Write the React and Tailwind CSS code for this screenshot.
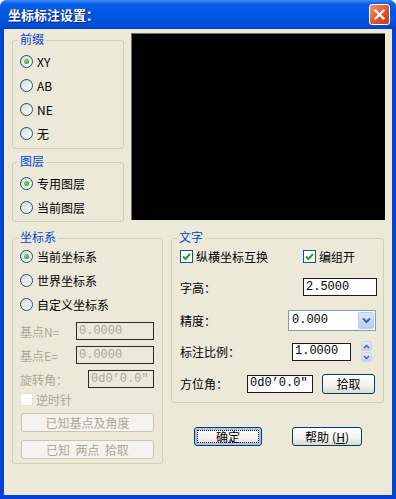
import React from 'react';

const BODY_BG = 'bg-[#ece9d8]';

function GroupBox({ label, className = '', children }) {
    return (
        <div className={`relative rounded-[3px] border border-[#d0d0bf] ${className}`}>
            <span className="absolute left-[5px] top-[-9px] bg-[#ece9d8] px-[2px] text-[12px] leading-[14px] text-[#0046d5]">
                {label}
            </span>
            {children}
        </div>
    );
}

function Radio({ checked = false, label }) {
    return (
        <div className="flex h-[13px] items-center">
            <span className="flex h-[13px] w-[13px] flex-none items-center justify-center rounded-full border border-[#1c5180] bg-[linear-gradient(135deg,#d8d6cc,#ffffff)]">
                {checked && <span className="h-[5px] w-[5px] rounded-full bg-[radial-gradient(circle_at_35%_35%,#6ee06e,#1a9a1a)]" />}
            </span>
            <span className="ml-[4px] text-[12px] leading-[13px] text-black">{label}</span>
        </div>
    );
}

function CheckBox({ checked = false, disabled = false, label }) {
    return (
        <div className="flex h-[13px] items-center">
            <span
                className={`flex h-[13px] w-[13px] flex-none items-center justify-center border bg-white ${
                    disabled ? 'border-[#e3e1d6]' : 'border-[#1c5180]'
                }`}
            >
                {checked && (
                    <svg width="11" height="11" viewBox="0 0 11 11">
                        <path d="M2 5.5 L4.5 8 L9 3" fill="none" stroke="#21a121" strokeWidth="2" />
                    </svg>
                )}
            </span>
            <span className={`ml-[3px] text-[12px] leading-[13px] ${disabled ? 'text-[#aca899]' : 'text-black'}`}>{label}</span>
        </div>
    );
}

function XPButton({ children, className = '', focused = false, disabled = false }) {
    if (disabled) {
        return (
            <div className={`flex items-center justify-center rounded-[3px] border border-[#c9c7ba] bg-[#f4f3ee] text-[12px] leading-[13px] text-[#aca899] ${className}`}>
                {children}
            </div>
        );
    }
    return (
        <div
            className={`flex items-center justify-center rounded-[3px] border border-[#003c74] bg-[linear-gradient(to_bottom,#ffffff,#f3f2ec_60%,#dcd8cb)] text-[12px] leading-[13px] text-black ${
                focused ? 'shadow-[inset_0_0_0_2px_#a6c2f2] outline-1 outline-dotted outline-black outline-offset-[-4px]' : ''
            } ${className}`}
        >
            {children}
        </div>
    );
}

function TextBox({ value, className = '', disabled = false }) {
    return (
        <div
            className={`flex items-center border pl-[2px] font-['Liberation_Mono',monospace] text-[12px] leading-[13px] ${
                disabled ? 'border-[#2a2a2a] bg-[#ece9d8] text-[#aca899]' : 'border-[#1b1b1b] bg-white text-black'
            } ${className}`}
        >
            {value}
        </div>
    );
}

export default function App() {
    return (
        <div className="flex h-[499px] w-[396px] flex-col rounded-t-[7px] bg-[#0841d6] font-['Noto_Sans_CJK_SC',sans-serif]">
            {/* title bar */}
            <div className="flex h-[29px] flex-none items-center rounded-t-[7px] bg-[linear-gradient(to_bottom,#3e8cf6_0%,#0a5fe9_14%,#0056e6_45%,#0052df_80%,#0043c6_100%)] pl-[8px] pr-[6px]">
                <span className="text-[13px] font-bold leading-[14px] text-white [text-shadow:1px_1px_0_#0a1e6e]">坐标标注设置：</span>
                <div className="ml-auto flex h-[21px] w-[21px] items-center justify-center rounded-[3px] border border-white bg-[linear-gradient(135deg,#f09a78,#df5a30_50%,#c23a14)]">
                    <svg width="13" height="13" viewBox="0 0 13 13">
                        <path d="M2.5 2.5 L10.5 10.5 M10.5 2.5 L2.5 10.5" stroke="white" strokeWidth="2.2" strokeLinecap="square" />
                    </svg>
                </div>
            </div>

            {/* body */}
            <div className={`mx-[4px] mb-[4px] flex-1 ${BODY_BG} pl-[8px] pt-[4px]`}>
                <div className="flex gap-[7px]">
                    <div className="flex w-[112px] flex-col pt-[7px]">
                        <GroupBox label="前缀" className="flex h-[109px] flex-col gap-[11px] pl-[7px] pt-[14px]">
                            <Radio checked label="XY" />
                            <Radio label="AB" />
                            <Radio label="NE" />
                            <Radio label="无" />
                        </GroupBox>
                        <GroupBox label="图层" className="mt-[13px] flex h-[60px] flex-col gap-[11px] pl-[7px] pt-[14px]">
                            <Radio checked label="专用图层" />
                            <Radio label="当前图层" />
                        </GroupBox>
                    </div>
                    <div className="h-[187px] w-[254px] border-l border-t border-[#716f64] bg-black" />
                </div>

                <div className="mt-[16px] flex gap-[8px]">
                    <GroupBox label="坐标系" className="flex h-[226px] w-[151px] flex-none flex-col pl-[7px] pt-[11px]">
                        <div className="flex flex-col gap-[11px]">
                            <Radio checked label="当前坐标系" />
                            <Radio label="世界坐标系" />
                            <Radio label="自定义坐标系" />
                        </div>
                        <div className="mt-[11px] flex h-[18px] items-center">
                            <span className="w-[56px] text-[12px] leading-[13px] text-[#aca899]">基点N=</span>
                            <TextBox disabled value="0.0000" className="h-[18px] w-[78px]" />
                        </div>
                        <div className="mt-[6px] flex h-[18px] items-center">
                            <span className="w-[56px] text-[12px] leading-[13px] text-[#aca899]">基点E=</span>
                            <TextBox disabled value="0.0000" className="h-[18px] w-[78px]" />
                        </div>
                        <div className="mt-[6px] flex h-[18px] items-center">
                            <span className="w-[68px] text-[12px] leading-[13px] text-[#aca899]">旋转角：</span>
                            <TextBox disabled value={'0d0\u20190.0\u2033'} className="h-[18px] w-[66px]" />
                        </div>
                        <div className="mt-[5px]">
                            <CheckBox disabled label="逆时针" />
                        </div>
                        <XPButton disabled className="ml-[1px] mt-[7px] h-[19px] w-[133px]">已知基点及角度</XPButton>
                        <XPButton disabled className="ml-[1px] mt-[8px] h-[19px] w-[133px]">
                            {'已知\u00a0\u00a0两点\u00a0\u00a0拾取'}
                        </XPButton>
                    </GroupBox>

                    <div className="flex flex-col">
                        <GroupBox label="文字" className="flex h-[165px] w-[213px] flex-col pl-[8px] pt-[11px]">
                            <div className="flex">
                                <div className="w-[123px]">
                                    <CheckBox checked label="纵横坐标互换" />
                                </div>
                                <CheckBox checked label="编组开" />
                            </div>
                            <div className="mt-[15px] flex h-[18px] items-center">
                                <span className="w-[123px] text-[12px] leading-[13px]">字高：</span>
                                <TextBox value="2.5000" className="h-[18px] w-[74px]" />
                            </div>
                            <div className="mt-[14px] flex h-[21px] items-center">
                                <span className="w-[108px] text-[12px] leading-[13px]">精度：</span>
                                <div className="flex h-[21px] w-[88px] items-center border border-[#7f9db9] bg-white pl-[3px] pr-[1px]">
                                    <span className="font-['Liberation_Mono',monospace] text-[12px] leading-[13px]">0.000</span>
                                    <span className="ml-auto flex h-[17px] w-[16px] items-center justify-center rounded-[2px] border border-[#b9cdf5] bg-[linear-gradient(to_bottom,#dbe6fd,#b6cbf7)]">
                                        <svg width="9" height="7" viewBox="0 0 9 7">
                                            <path d="M1 1.5 L4.5 5 L8 1.5" fill="none" stroke="#4d6185" strokeWidth="2" />
                                        </svg>
                                    </span>
                                </div>
                            </div>
                            <div className="mt-[10px] flex h-[21px] items-center">
                                <span className="w-[112px] text-[12px] leading-[13px]">标注比例：</span>
                                <TextBox value="1.0000" className="h-[18px] w-[59px]" />
                                <div className="ml-[10px] flex h-[21px] flex-col justify-between">
                                    <span className="flex h-[10px] w-[11px] items-center justify-center rounded-[2px] border border-[#c6d5f5] bg-[linear-gradient(to_bottom,#e4ecfd,#bccff8)]">
                                        <svg width="7" height="5" viewBox="0 0 7 5">
                                            <path d="M1 4 L3.5 1.5 L6 4" fill="none" stroke="#4d6185" strokeWidth="1.4" />
                                        </svg>
                                    </span>
                                    <span className="flex h-[10px] w-[11px] items-center justify-center rounded-[2px] border border-[#c6d5f5] bg-[linear-gradient(to_bottom,#e4ecfd,#bccff8)]">
                                        <svg width="7" height="5" viewBox="0 0 7 5">
                                            <path d="M1 1 L3.5 3.5 L6 1" fill="none" stroke="#4d6185" strokeWidth="1.4" />
                                        </svg>
                                    </span>
                                </div>
                            </div>
                            <div className="mt-[11px] flex h-[21px] items-center">
                                <span className="w-[67px] text-[12px] leading-[13px]">方位角：</span>
                                <TextBox value={'0d0\u20190.0\u2033'} className="h-[18px] w-[66px]" />
                                <XPButton className="ml-[9px] h-[20px] w-[53px]">拾取</XPButton>
                            </div>
                        </GroupBox>

                        <div className="mt-[24px] flex">
                            <XPButton focused className="ml-[23px] h-[19px] w-[68px]">确定</XPButton>
                            <XPButton className="ml-[30px] h-[19px] w-[70px]">
                                帮助<span className="ml-[3px]">(</span><span className="underline">H</span>)
                            </XPButton>
                        </div>
                    </div>
                </div>
            </div>
        </div>
    );
}
